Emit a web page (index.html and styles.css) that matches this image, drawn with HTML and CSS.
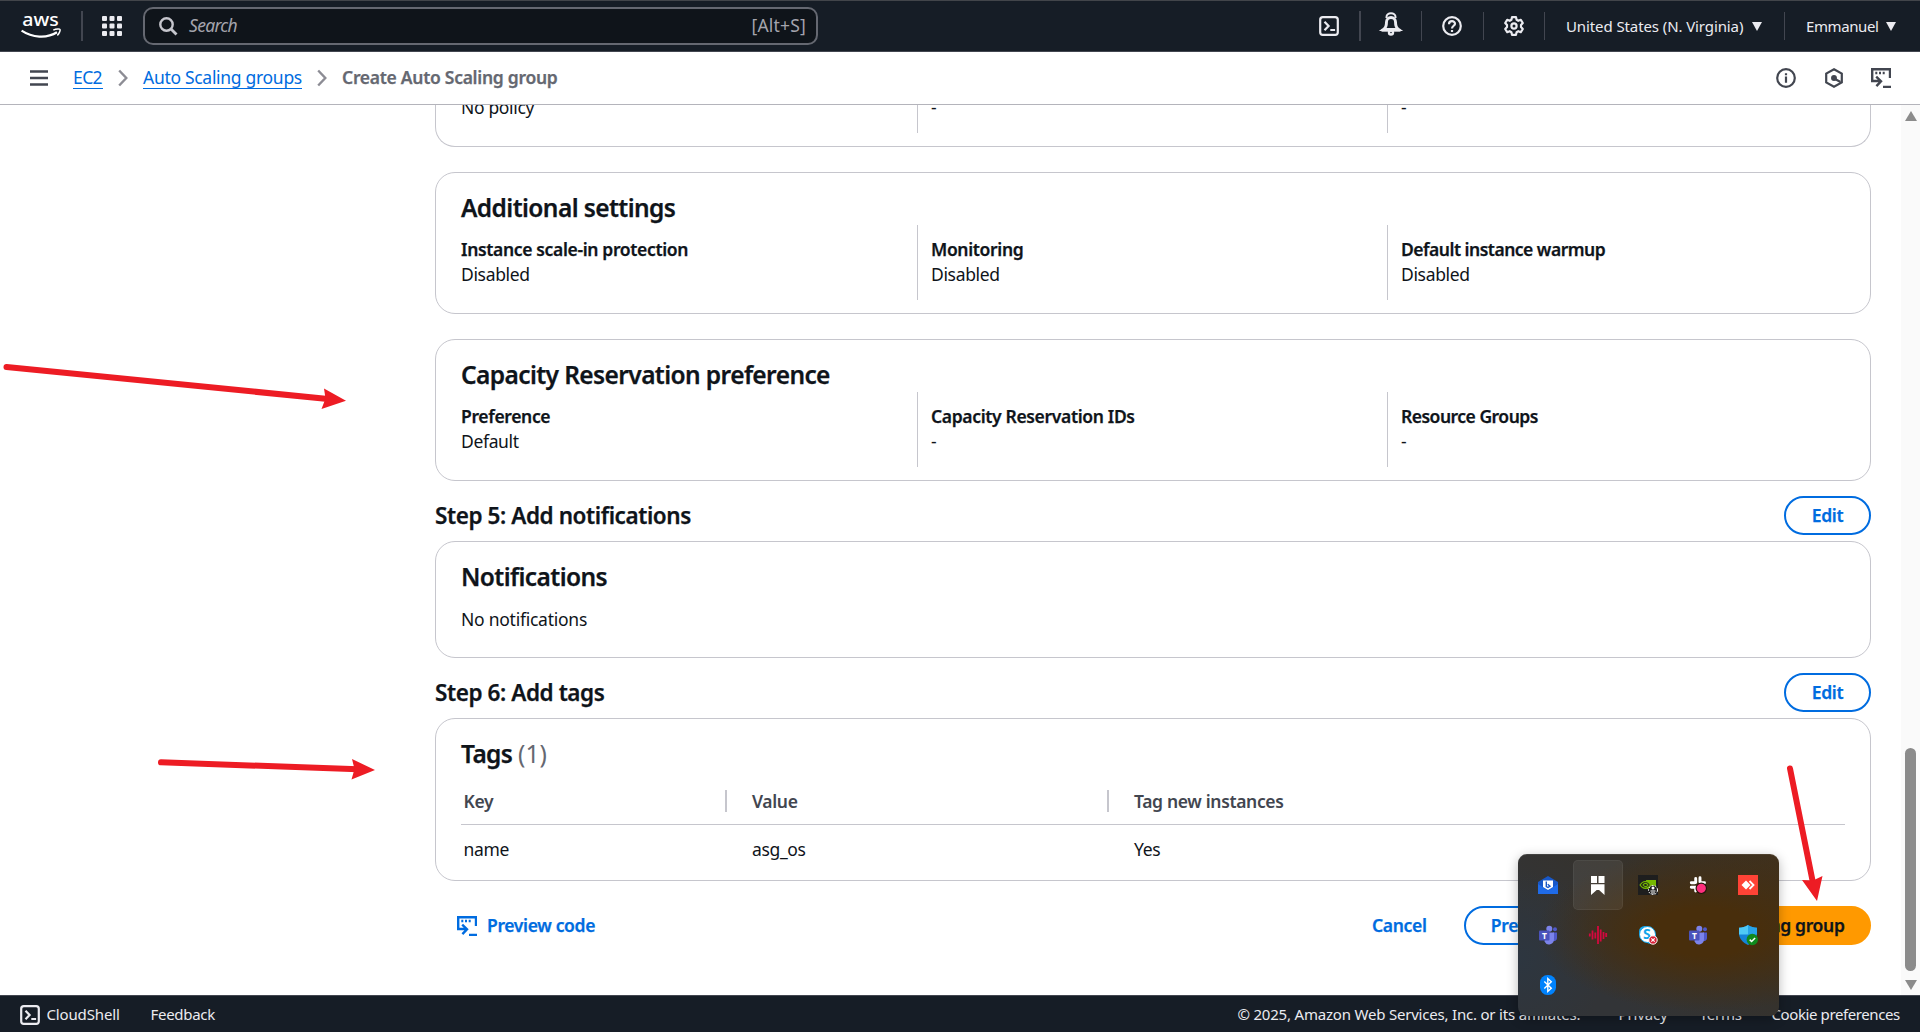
FILE: index.html
```html
<!DOCTYPE html>
<html lang="en">
<head>
<meta charset="utf-8">
<title>Create Auto Scaling group | EC2</title>
<link rel="stylesheet" href="styles.css">
</head>
<body>
<svg class="defs" width="0" height="0">
  <symbol id="i-shell" viewBox="0 0 20 20"><rect x="1.2" y="1.2" width="17.6" height="17.6" rx="2.6" fill="none" stroke="currentColor" stroke-width="2.2"/><path d="M5.5 5.7 9.6 10l-4.1 4.2M11.3 14h4.8" fill="none" stroke="currentColor" stroke-width="2.2"/></symbol>
  <symbol id="i-code" viewBox="0 0 20 20"><path d="M19 10V1.200H1.200V13H10M5.200 8.600 10 13.200l-4.600 4.900" fill="none" stroke="currentColor" stroke-width="2.400"/><path d="M12 18.800h8M4.300 5h2M8 5h2M11.700 5h2" fill="none" stroke="currentColor" stroke-width="2.300"/></symbol>
  <symbol id="i-chev" viewBox="0 0 10 18"><path d="M1.2 1.5 8.3 9 1.2 16.5" fill="none" stroke="currentColor" stroke-width="2.4"/></symbol>
</svg>

<header class="topnav">
  <svg class="aws" viewBox="0 0 40 28" width="40" height="28">
    <text x="1.2" y="13.4" font-size="17.5" font-weight="500" fill="#fff" textLength="36.5" lengthAdjust="spacingAndGlyphs">aws</text>
    <path d="M.6 17.6c10.500 7 25 8.300 35.400 1.700" fill="none" stroke="#fff" stroke-width="2.200"/>
    <path d="M32.300 17.200c3-1.500 6.600-1.300 6.800-.6.200.9-.8 4-2.800 5.800" fill="none" stroke="#fff" stroke-width="1.500"/>
  </svg>
  <i class="vline thick"></i>
  <svg class="grid9" viewBox="0 0 20 20" width="20" height="20" fill="#ebebf0">
    <rect x="0" y="0" width="5" height="5" rx="1"/><rect x="7.500" y="0" width="5" height="5" rx="1"/><rect x="15" y="0" width="5" height="5" rx="1"/>
    <rect x="0" y="7.500" width="5" height="5" rx="1"/><rect x="7.500" y="7.500" width="5" height="5" rx="1"/><rect x="15" y="7.500" width="5" height="5" rx="1"/>
    <rect x="0" y="15" width="5" height="5" rx="1"/><rect x="7.500" y="15" width="5" height="5" rx="1"/><rect x="15" y="15" width="5" height="5" rx="1"/>
  </svg>
  <div class="search">
    <svg viewBox="0 0 19 19" width="19" height="19" fill="none" stroke="#c6c6cd" stroke-width="2.400"><circle cx="7.500" cy="7.500" r="6.200"/><path d="m12 12 5.500 5.500" stroke-width="2.800"/></svg>
    <span class="ph">Search</span><span class="key">[Alt+S]</span>
  </div>
  <div class="tools">
    <span class="tool"><svg width="20" height="20"><use href="#i-shell"/></svg></span>
    <i class="vline thick"></i>
    <span class="tool bell"><svg viewBox="0 0 20 24" width="20" height="24" fill="none" stroke="#ebebf0"><path d="M5.500 6V5a4.500 3.800 0 0 1 9 0v1" stroke-width="2"/><path d="M2.500 17.500c2.200-1.500 3-3.500 3-7.500a4.500 4.500 0 0 1 9 0c0 4 .8 6 3 7.500z" stroke-width="2.900"/><path d="M.5 18.300h19" stroke-width="2.800"/><circle cx="10" cy="20.500" r="2" stroke-width="2.400"/></svg></span>
    <i class="vline"></i>
    <span class="tool"><svg viewBox="0 0 20 20" width="20" height="20" fill="none" stroke="#ebebf0" stroke-width="2.200"><circle cx="10" cy="10" r="8.800"/><path d="M7 8.200c0-4 6-3.900 6-.5 0 2-3 2.200-3 4.800M10 14v2"/></svg></span>
    <i class="vline short"></i>
    <span class="tool"><svg viewBox="0 0 20 20" width="20" height="20" fill="none" stroke="#ebebf0" stroke-width="2.200" stroke-linejoin="round"><path d="M8 1.200h4l.6 2.600 1.700 1 2.500-1 2 3.200-1.800 2v2l1.800 2-2 3.200-2.500-1-1.700 1-.6 2.600H8l-.6-2.600-1.700-1-2.500 1-2-3.200 1.800-2V9l-1.800-2 2-3.200 2.500 1 1.700-1z"/><circle cx="10" cy="10" r="2.600"/></svg></span>
    <i class="vline short"></i>
    <span class="menu region">United States (N. Virginia)</span><b class="caret"></b>
    <i class="vline short"></i>
    <span class="menu user">Emmanuel</span><b class="caret"></b>
  </div>
</header>

<nav class="crumbs">
  <svg class="burger" viewBox="0 0 18 16" width="18" height="16"><path d="M0 1.500h18M0 8h18M0 14.500h18" stroke="#424650" stroke-width="2.300"/></svg>
  <a class="c1">EC2</a>
  <svg class="chev" width="10" height="18"><use href="#i-chev"/></svg>
  <a class="c2">Auto Scaling groups</a>
  <svg class="chev" width="10" height="18"><use href="#i-chev"/></svg>
  <strong>Create Auto Scaling group</strong>
  <div class="crumb-tools">
    <svg viewBox="0 0 20 20" width="20" height="20" fill="none" stroke="currentColor" stroke-width="2.200"><circle cx="10" cy="10" r="8.800"/><path d="M10 8.600v6.200M10 5.200v2.100"/></svg>
    <svg viewBox="0 0 20 20" width="20" height="20" fill="none" stroke="currentColor" stroke-width="2.200"><path d="M10 1.200 17.800 5.600v8.800L10 18.800 2.200 14.400V5.600z"/><circle cx="10" cy="10" r="2.200" fill="currentColor" stroke-width="1.500"/><path d="m11 11 5.500 3"/></svg>
    <svg width="20" height="20"><use href="#i-code"/></svg>
  </div>
</nav>

<div class="viewport">
  <main>
    <section class="card clipped">
      <div class="cols"><div><p>No policy</p></div><div><p>-</p></div><div><p>-</p></div></div>
    </section>
    <section class="card tall">
      <h2>Additional settings</h2>
      <div class="cols">
        <div><h4>Instance scale-in protection</h4><p>Disabled</p></div>
        <div><h4>Monitoring</h4><p>Disabled</p></div>
        <div><h4>Default instance warmup</h4><p>Disabled</p></div>
      </div>
    </section>
    <section class="card tall">
      <h2>Capacity Reservation preference</h2>
      <div class="cols">
        <div><h4>Preference</h4><p>Default</p></div>
        <div><h4>Capacity Reservation IDs</h4><p>-</p></div>
        <div><h4>Resource Groups</h4><p>-</p></div>
      </div>
    </section>
    <div class="step"><h3>Step 5: Add notifications</h3><button class="btn">Edit</button></div>
    <section class="card notes"><h2>Notifications</h2><p>No notifications</p></section>
    <div class="step"><h3>Step 6: Add tags</h3><button class="btn">Edit</button></div>
    <section class="card tags">
      <h2>Tags <span>(1)</span></h2>
      <div class="trow thead"><b>Key</b><b>Value</b><b>Tag new instances</b></div>
      <div class="trow"><span>name</span><span>asg_os</span><span>Yes</span></div>
    </section>
    <div class="actions">
      <a class="preview"><svg width="20" height="20"><use href="#i-code"/></svg>Preview code</a>
      <a class="cancel">Cancel</a>
      <button class="btn prev">Previous</button>
      <button class="btn primary">Create Auto Scaling group</button>
    </div>
  </main>
  <div class="scroll"><i class="up"></i><i class="thumb"></i><i class="down"></i></div>
</div>

<footer>
  <svg width="20" height="20"><use href="#i-shell"/></svg>
  <span class="cs">CloudShell</span><span class="fb">Feedback</span>
  <span class="copy">© 2025, Amazon Web Services, Inc. or its affiliates.</span>
  <span class="pv">Privacy</span><span class="tm">Terms</span><span class="ck">Cookie preferences</span>
</footer>

<svg class="arrows" viewBox="0 0 1920 1032" width="1920" height="1032">
  <g stroke="#ed1c24" stroke-width="6" stroke-linecap="round" fill="#ed1c24">
    <path d="M6.500 367 328 399"/><path d="M161 762.300 358 769.200"/><path d="M1790 768.500 1813 883"/>
    <g stroke="none"><path d="M346 400.700 324 388.500 325.500 398.500 321.500 409z"/><path d="M375 770 352 759 354.500 769 351.500 779.500z"/><path d="M1817 901 1822.500 876 1813 880.500 1802 880z"/></g>
  </g>
</svg>

<aside class="tray">
  <span><svg viewBox="0 0 20 20" width="20" height="20"><path d="M0 7 10 1l10 6v12H0z" fill="#1857c7"/><path d="M0 9l10 6.500L20 9v10H0z" fill="#1f6be8"/><path d="M5 5.500h10V12l-5 3-5-3z" fill="#fff"/><path d="M8.300 6.500v5l1.700 1 2-1.400-2.300-1.800" fill="none" stroke="#1857c7" stroke-width="1.400"/></svg></span>
  <span class="hover"><svg viewBox="0 0 20 20" width="20" height="20" fill="#fff"><path d="M3 1h6v7H3zM10.500 1h6v7h-6zM3 9.300h6V14.700L3 20zM10.500 9.300h6V20l-6-5.400zM8.500 9.300h2.500v5.800h-2.500z"/></svg></span>
  <span><svg viewBox="0 0 20 20" width="20" height="20"><path fill="#1e1e1e" d="M0 0h20v20H0z"/><path fill="#76b900" d="M8 5h10v9H9z"/><path d="M2 10c3-5 8-4.500 10.500 0-3 4.500-7.500 4.500-10.500 0zm3 0c1.500-2.400 3.800-2 5 0-1.500 2.400-3.500 2-5 0z" fill="#1e1e1e" stroke="#76b900" stroke-width="1.100"/><circle cx="15" cy="15" r="4.500" fill="#1e1e1e" stroke="#fff" stroke-dasharray="2 1.200"/><circle cx="15" cy="13" r="1.500" fill="#fff"/><path d="M12.500 16h5M13 18h4" stroke="#fff" stroke-width="1.200"/></svg></span>
  <span><svg viewBox="0 0 20 20" width="20" height="20" stroke-linecap="round"><path d="M7.700 3.500v4M12 2.800V7M3.300 7.700h3.500M12.500 7.700h4M3.300 12.200h4.500M7.700 12.200V16" stroke="#fff" stroke-width="2.900" fill="none"/><circle cx="13.300" cy="13.300" r="5.200" fill="#ff2f7e" stroke="#24160a" stroke-width="1.200"/></svg></span>
  <span><svg viewBox="0 0 20 20" width="20" height="20"><path fill="#ff4336" d="M0 0h20v20H0z"/><path d="m8 5.500 4.500 4.500L8 14.500 3.500 10z" fill="#fff"/><path d="m11.500 6 4 4-4 4" fill="none" stroke="#fff" stroke-width="1.800"/></svg></span>
  <span><svg viewBox="0 0 20 20" width="20" height="20"><circle cx="11.300" cy="3.700" r="3" fill="#7b83eb"/><circle cx="17" cy="4.300" r="2" fill="#5059c9"/><path d="M15 7.500h4v5.500a3 3 0 0 1-4 2.800z" fill="#5059c9"/><path d="M8 7.500h8v6.500a5 5 0 0 1-9.500 2.500z" fill="#7b83eb"/><rect x="1" y="5.500" width="10.500" height="10" rx="1" fill="#4b53bc"/><text x="6.500" y="13.600" text-anchor="middle" font-size="8.500" font-weight="700" fill="#fff">T</text></svg></span>
  <span><svg viewBox="0 0 20 20" width="20" height="20" stroke="#d4083f" stroke-width="1.800"><path d="M1.800 8.500v3M4.500 5.500v9M7.300 7.500v6M10 1v18M12.700 4.500v12M15.500 7v7M18.200 8v4"/></svg></span>
  <span><svg viewBox="0 0 20 20" width="20" height="20"><circle cx="6.500" cy="6.500" r="5.500" fill="#12a5ea"/><circle cx="12.500" cy="13" r="6" fill="#12a5ea"/><circle cx="9.500" cy="9.500" r="8" fill="#fff" stroke="#12a5ea"/><text x="8.800" y="14.300" font-size="14" font-weight="700" text-anchor="middle" fill="#12a5ea">S</text><circle cx="15" cy="15" r="4.200" fill="#d71f35" stroke="#fff"/><path d="m13.300 13.300 3.400 3.400m0-3.400-3.400 3.400" stroke="#fff" stroke-width="1.200"/></svg></span>
  <span><svg viewBox="0 0 20 20" width="20" height="20"><circle cx="11.300" cy="3.700" r="3" fill="#7b83eb"/><circle cx="17" cy="4.300" r="2" fill="#5059c9"/><path d="M15 7.500h4v5.500a3 3 0 0 1-4 2.800z" fill="#5059c9"/><path d="M8 7.500h8v6.500a5 5 0 0 1-9.500 2.500z" fill="#7b83eb"/><rect x="1" y="5.500" width="10.500" height="10" rx="1" fill="#4b53bc"/><text x="6.500" y="13.600" text-anchor="middle" font-size="8.500" font-weight="700" fill="#fff">T</text></svg></span>
  <span><svg viewBox="0 0 20 20" width="20" height="20"><path d="M10 0c3 2 5.500 2.700 9 2.800V8c0 6-4 9.500-9 12-5-2.500-9-6-9-12V2.800C4.500 2.700 7 2 10 0z" fill="#1583d8"/><path d="M10 0v9.500H1V2.800C4.500 2.700 7 2 10 0z" fill="#4fc9f5"/><path d="M10 0c3 2 5.500 2.700 9 2.800V9.500h-9z" fill="#28a4e8"/><circle cx="14.300" cy="14.500" r="5.700" fill="#0f8a1d"/><path d="m11.700 14.600 1.900 1.900 3.500-3.600" fill="none" stroke="#fff" stroke-width="1.500"/></svg></span>
  <span><svg viewBox="0 0 20 20" width="20" height="20"><rect x="2" y="0" width="16" height="20" rx="7.500" fill="#0082fc"/><path d="m6.300 6.600 7 6.600-3.500 3.300V3.500l3.500 3.300-7 6.600" fill="none" stroke="#fff" stroke-width="1.400"/></svg></span>
</aside>
</body>
</html>
```
FILE: styles.css
```css
* { box-sizing: border-box; margin: 0; padding: 0; }
body {
  width: 1920px; height: 1032px; overflow: hidden; position: relative;
  display: flex; flex-direction: column; background: #fff; color: #0f141a;
  font: 17.5px/25px "Noto Sans", "Open Sans", sans-serif; letter-spacing: -0.34px;
}
svg { display: block; flex: none; overflow: visible; }
svg text { letter-spacing: 0; }
.defs { position: absolute; }
a { color: #006ce0; }
h2, h3, h4, strong, .btn, .actions { -webkit-text-stroke: 0.25px currentColor; }

/* top navigation */
.topnav {
  height: 52px; flex: none; display: flex; align-items: center;
  background: #161d26; border-top: 1px solid #42454a; border-bottom: 1px solid #424650;
  padding-left: 21px; color: #ebebf0;
}
.aws { margin-top: 2px; }
.vline { width: 1px; height: 30px; background: #424650; flex: none; }
.vline.thick { width: 2px; }
.vline.short { height: 28px; }
.aws + .vline { margin: 0 19px 0 20px; }
.search {
  width: 675px; height: 38px; margin-left: 21px; padding: 0 10px 0 14px;
  display: flex; align-items: center; background: #0f141a;
  border: 2px solid #656871; border-radius: 10px; color: #a4a4ad;
}
.search span { margin-top: -1px; }
.search .ph { margin-left: 11px; font-style: italic; letter-spacing: -0.7px; }
.search .key { margin-left: auto; letter-spacing: 0.2px; }
.tools { margin-left: auto; display: flex; align-items: center; padding-right: 24px; }
.tool { width: 60.400px; display: flex; justify-content: center; }
.tool.bell svg { margin-top: -4px; }
.menu { font-size: 15px; padding-left: 21px; white-space: nowrap; }
.region { letter-spacing: -0.1px; width: 201px; }
.user { width: 96px; letter-spacing: -0.4px; padding-left: 21px; }
.caret { border: 5.500px solid transparent; border-top: 9px solid #ebebf0; border-bottom: 0; margin: 0 22px 0 6px; }
.caret:last-child { margin: 0 0 0 5px; }

/* breadcrumbs */
.crumbs {
  height: 53px; flex: none; display: flex; align-items: center;
  border-bottom: 1px solid #b4b4bb; padding: 0 29px 0 30px; color: #656871;
}
.burger { margin: 0 25px 0 0; }
.crumbs a { border-bottom: 1px solid #006ce0; line-height: 21px; margin-top: -1px; white-space: nowrap; }
.c1 { width: 30px; letter-spacing: -0.6px; }
.c2 { width: 159px; letter-spacing: -0.3px; }
.chev { margin: 0 15px 0; color: #8c8c94; }
.crumbs strong { font-weight: 600; letter-spacing: -0.28px; margin-top: -2px; }
.crumb-tools { margin-left: auto; display: flex; gap: 27.500px; color: #424650; }

/* scrolling content */
.viewport { flex: none; height: 890px; display: flex; overflow: hidden; }
main { width: 1436px; margin-left: 435px; }
.card { border: 1px solid #c6c6cd; border-radius: 20px; padding: 20px 25px 0; }
.card h2 { font-size: 24.500px; line-height: 30px; font-weight: 600; letter-spacing: -0.600px; }
.card.clipped { border-top: 0; border-radius: 0 0 20px 20px; padding-top: 0; height: 42px; display: flex; align-items: flex-end; padding-bottom: 13px; }
.clipped .cols > div { padding-top: 0; }
.tall { height: 142px; margin-top: 25px; }
.cols { display: grid; grid-template-columns: repeat(3, 470px); margin: 2px -12px 0 -14px; }
.cols > div { padding: 12px 0 13px 14px; }
.cols > div + div { border-left: 1px solid #c6c6cd; padding-left: 13px; }
.cols h4 { font-size: 17.500px; font-weight: 600; }
.cols > :last-child h4 { letter-spacing: -0.500px; }
.step { display: flex; justify-content: space-between; align-items: center; height: 39px; margin: 15px 0 6px; }
.step h3 { font-size: 22.500px; font-weight: 600; letter-spacing: -0.42px; }
.btn {
  width: 87px; height: 39px; border: 2px solid #006ce0; border-radius: 20px; background: #fff;
  color: #006ce0; font: 600 17.500px/25px "Noto Sans", sans-serif; letter-spacing: -0.34px; padding: 0;
}
.notes { height: 117px; }
.notes p { margin-top: 15px; letter-spacing: -0.25px; }
.tags { height: 163px; }
.tags h2 span { font-weight: 400; color: #656871; letter-spacing: 0; -webkit-text-stroke: 0; }
.trow { display: grid; grid-template-columns: 266px 382px 1fr; line-height: 25px; }
.trow > * { padding: 12px 0 0 25px; }
.thead { border-bottom: 1px solid #c6c6cd; color: #424650; margin-top: 7px; height: 49px; align-items: center; }
.thead > * { font-weight: 600; padding-top: 0; line-height: 22px; margin-top: 1px; }
.thead > *:not(:last-child) { border-right: 2px solid #c6c6cd; }
.trow > :first-child { padding-left: 2.500px; }
.actions { display: flex; align-items: center; margin-top: 25px; padding-left: 22px; font-weight: 600; }
.preview { display: flex; align-items: center; gap: 10px; }
.cancel { margin-left: auto; width: 92px; }
.prev { width: 124px; margin-right: 18px; }
.primary { background: #f90; border-color: #f90; color: #0f141a; width: 267px; margin-left: -2px; margin-right: 0; padding-right: 1px; }
.prev + .primary { margin-left: 0; width: 265px; padding-right: 2px; }
.scroll {
  width: 19px; margin-left: auto; background: #fafafa;
  display: flex; flex-direction: column; align-items: center;
}
.up { border: 6.500px solid transparent; border-bottom: 10px solid #8b8b8b; border-top: 0; margin-top: 6px; }
.thumb { width: 11px; height: 223px; border-radius: 6px; background: #8b8b8b; margin-top: auto; }
.down { border: 6.500px solid transparent; border-top: 10px solid #8b8b8b; border-bottom: 0; margin: 9px 0 5px; }

/* footer */
footer {
  flex: none; height: 37px; display: flex; align-items: center; padding: 1px 20px 0;
  background: #161d26; border-top: 1px solid #424650; color: #ebebf0; font-size: 15px; letter-spacing: -0.15px;
  white-space: nowrap;
}
.cs { margin-left: 6.500px; width: 104px; }
.fb { letter-spacing: -0.300px; }
.copy { margin-left: auto; width: 381px; letter-spacing: -0.2px; }
.pv { width: 81px; }
.tm { width: 72px; }
.ck { width: 128.500px; letter-spacing: -0.4px; }

/* overlays above the page */
.arrows { position: absolute; left: 0; top: 0; }
.tray {
  position: absolute; left: 1518px; top: 854px; width: 261px; height: 162px; padding: 6px 5px;
  display: grid; grid-template-columns: repeat(5, 50px); grid-auto-rows: 50px;
  border-radius: 9px; box-shadow: 0 3px 12px rgba(0, 0, 0, .28), inset 0 1px 0 rgba(255, 255, 255, .08);
  background:
    radial-gradient(ellipse 170px 80px at 72% 48%, #482e0c 30%, rgba(72, 46, 12, 0)),
    radial-gradient(ellipse 90px 90px at 0 65%, #2d3640, rgba(45, 54, 64, 0)),
    linear-gradient(40deg, #323437 25%, #35322d 60%, #40301b);
}
.tray span { display: flex; align-items: center; justify-content: center; }
.tray .hover { background: rgba(255, 255, 255, .07); border: 1px solid rgba(255, 255, 255, .05); border-radius: 5px; }
```
